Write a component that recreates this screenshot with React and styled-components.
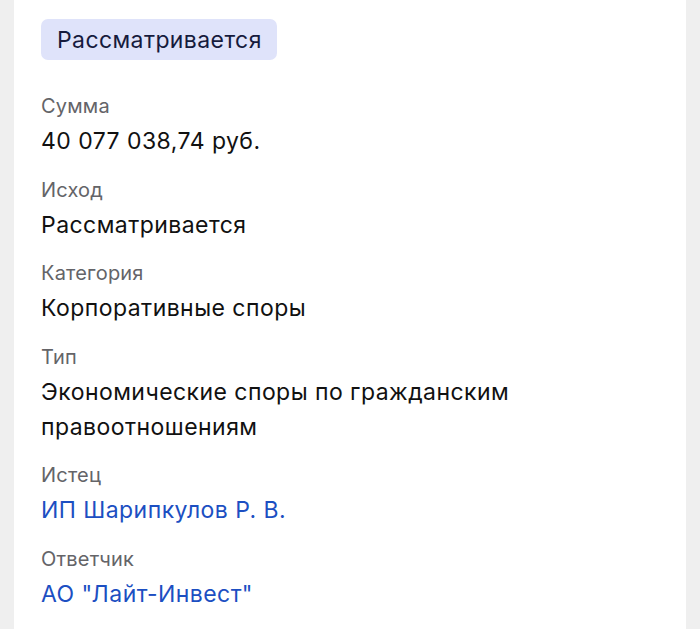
import React from "react";
import styled, { createGlobalStyle } from "styled-components";

const GlobalStyle = createGlobalStyle`
  html, body {
    margin: 0;
    padding: 0;
    background: #efefef;
  }
  body {
    font-family: Inter, "Noto Sans", sans-serif;
    -webkit-font-smoothing: antialiased;
  }
`;

const Page = styled.div`
  display: flex;
  padding: 0 14px;
  min-height: 629px;
`;

const Card = styled.div`
  flex: 1;
  background: #ffffff;
  padding: 19px 28px 20px 27px;
  display: flex;
  flex-direction: column;
  align-items: flex-start;
`;

const Badge = styled.div`
  background: #dfe3fa;
  color: #161b3d;
  border-radius: 7px;
  padding: 0 15px 0 16px;
  height: 41px;
  display: flex;
  align-items: center;
  font-size: 23px;
  letter-spacing: 0.4px;
  margin-bottom: 33px;
`;

const Fields = styled.div`
  display: flex;
  flex-direction: column;
  gap: 17.5px;
`;

const Field = styled.div`
  display: flex;
  flex-direction: column;
  gap: 5px;
`;

const Label = styled.div`
  font-size: 20px;
  line-height: 26px;
  letter-spacing: 0.2px;
  color: #646468;
`;

const Value = styled.div`
  font-size: 23px;
  line-height: 35px;
  letter-spacing: 0.45px;
  color: ${(p) => (p.$link ? "#1c4fc2" : "#111111")};
  max-width: 490px;
`;

const rows = [
  { label: "Сумма", value: "40 077 038,74 руб." },
  { label: "Исход", value: "Рассматривается" },
  { label: "Категория", value: "Корпоративные споры" },
  { label: "Тип", value: "Экономические споры по гражданским правоотношениям" },
  { label: "Истец", value: "ИП Шарипкулов Р. В.", link: true },
  { label: "Ответчик", value: 'АО "Лайт-Инвест"', link: true },
];

export default function App() {
  return (
    <>
      <GlobalStyle />
      <Page>
        <Card>
          <Badge>Рассматривается</Badge>
          <Fields>
            {rows.map((r) => (
              <Field key={r.label}>
                <Label>{r.label}</Label>
                <Value $link={r.link}>{r.value}</Value>
              </Field>
            ))}
          </Fields>
        </Card>
      </Page>
    </>
  );
}
